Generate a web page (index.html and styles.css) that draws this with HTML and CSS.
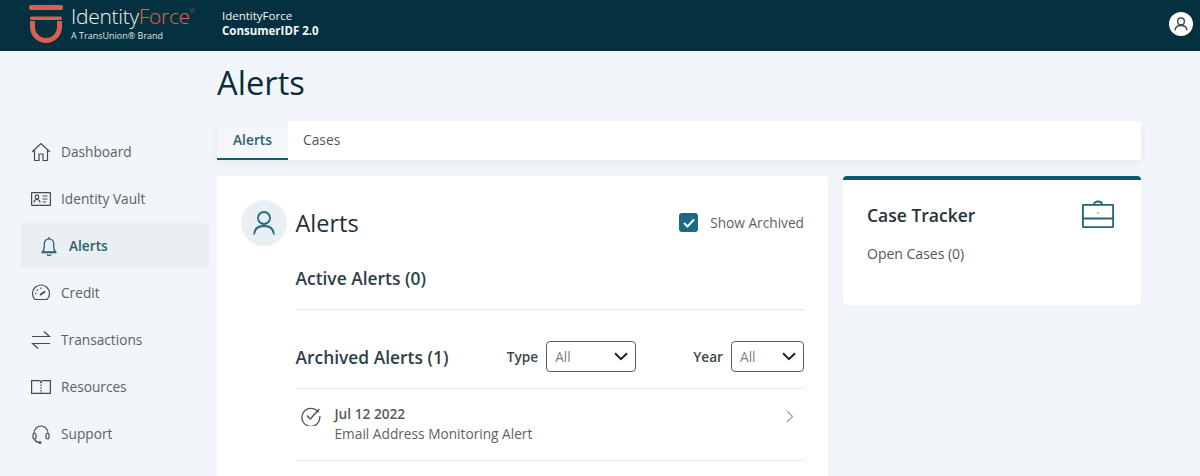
FILE: index.html
```html
<!DOCTYPE html>
<html lang="en">
<head>
<meta charset="utf-8">
<title>Alerts</title>
<link rel="stylesheet" href="styles.css">
</head>
<body>
<header class="topbar">
  <div class="brand">
    <svg class="logo" width="36" height="44" viewBox="0 0 36 44" fill="none">
      <rect x="1" y="3" width="34" height="5" rx="2" fill="#d9604f"/>
      <rect x="2" y="14.500" width="32" height="3.500" rx="1.500" fill="#d9604f"/>
      <path d="M4.500 19v6a13.500 13.500 0 0 0 27 0v-6" stroke="#d9604f" stroke-width="5"/>
    </svg>
    <div class="wordmark">
      <div class="wm-main">Identity<span class="wm-force">Force</span><sup class="wm-reg">®</sup></div>
      <div class="wm-sub">A TransUnion® Brand</div>
    </div>
  </div>
  <div class="product">
    <div>IdentityForce</div>
    <div class="product-b">ConsumerIDF 2.0</div>
  </div>
  <div class="avatar">
    <svg width="24" height="24" viewBox="0 0 24 24" fill="none" stroke="#3c4a52" stroke-width="1.800">
      <circle cx="12" cy="8.500" r="4.500"/>
      <path d="M4 20.500c.5-4.500 3.500-6.500 8-6.500s7.500 2 8 6.500"/>
    </svg>
  </div>
</header>
<div class="layout">
  <nav class="side">
    <a class="nav-item">
      <svg class="nav-icon" width="20" height="20" viewBox="0 0 20 20" fill="none" stroke="#444c52" stroke-width="1.200"><path d="M1 10 10 1.500 19 10M3.500 8v10.500h4.500v-6.500h4v6.500h4.500V8"/></svg>
      <span>Dashboard</span>
    </a>
    <a class="nav-item">
      <svg class="nav-icon" width="20" height="20" viewBox="0 0 20 20" fill="none" stroke="#444c52" stroke-width="1.200"><rect x=".6" y="3.600" width="18.800" height="12.800" rx=".5"/><circle cx="6" cy="8" r="1.800"/><path d="M3 13.500c0-2 1.300-3 3-3s3 1 3 3M11.500 7h5M11.500 10h5M11.500 13h3.500"/></svg>
      <span>Identity Vault</span>
    </a>
    <a class="nav-item is-active">
      <svg class="nav-icon" width="18" height="20" viewBox="0 0 18 20" fill="none" stroke="#2f5f6e" stroke-width="1.300"><path d="M2.500 16c1.300-1.500 1.800-2.500 1.800-5V7.500a4.700 4.700 0 0 1 9.400 0V11c0 2.500.5 3.500 1.800 5zM1.500 16.500h15M9 1v1.500M7 18.200a2.200 2.200 0 0 0 4 0"/></svg>
      <span>Alerts</span>
    </a>
    <a class="nav-item">
      <svg class="nav-icon" width="20" height="20" viewBox="0 0 20 20" fill="none" stroke="#444c52" stroke-width="1.200"><path d="M4 16.500a8.500 8.500 0 1 1 12 0z"/><path d="M9 12l5-3.500" stroke-width="2"/><path d="M4 10.500h1.500M10 4.500V6M5.800 6.500l1 1"/></svg>
      <span>Credit</span>
    </a>
    <a class="nav-item">
      <svg class="nav-icon" width="20" height="20" viewBox="0 0 20 20" fill="none" stroke="#444c52" stroke-width="1.200"><path d="M1 6.500h17.500L13 1.500M19 13.500H1.500L7 18.500"/></svg>
      <span>Transactions</span>
    </a>
    <a class="nav-item">
      <svg class="nav-icon" width="20" height="20" viewBox="0 0 20 20" fill="none" stroke="#444c52" stroke-width="1.200"><path d="M.6 3.600h7q2 0 2.400 1.200.4-1.200 2.400-1.200h7v12.800H.6z"/><path d="M10 4.800v13" stroke-dasharray="1.500 1.200"/></svg>
      <span>Resources</span>
    </a>
    <a class="nav-item">
      <svg class="nav-icon" width="20" height="20" viewBox="0 0 20 20" fill="none" stroke="#444c52" stroke-width="1.200"><path d="M3 10V9a7 7 0 0 1 14 0v1"/><rect x="2" y="9.500" width="3" height="5.500" rx="1.500"/><rect x="15" y="9.500" width="3" height="5.500" rx="1.500"/><path d="M3.500 15c.5 2 2 3 4.500 3.500"/><circle cx="9" cy="18.500" r=".9"/></svg>
      <span>Support</span>
    </a>
  </nav>
  <main class="content">
    <h1 class="page-title">Alerts</h1>
    <div class="tabs">
      <div class="tab is-current">Alerts</div>
      <div class="tab">Cases</div>
    </div>
    <div class="columns">
      <section class="alerts-card">
        <div class="alerts-head">
          <div class="circle">
            <svg width="24" height="26" viewBox="0 0 24 26" fill="none" stroke="#1f6a80" stroke-width="1.800"><circle cx="12" cy="8" r="6"/><path d="M2 24.500c.5-6 4.500-8.500 10-8.500s9.500 2.500 10 8.500"/></svg>
          </div>
          <h2 class="alerts-title">Alerts</h2>
          <label class="show-archived">
            <span class="checkbox">
              <svg width="12" height="10" viewBox="0 0 12 10" fill="none" stroke="#fff" stroke-width="2"><path d="M1 5l3.500 3.500L11 1.500"/></svg>
            </span>
            <span>Show Archived</span>
          </label>
        </div>
        <div class="alerts-body">
          <h3 class="section-title active-title">Active Alerts (0)</h3>
          <div class="archived-row">
            <h3 class="section-title">Archived Alerts (1)</h3>
            <div class="filters">
              <div class="filter">
                <span class="filter-label">Type</span>
                <div class="select select-type"><span>All</span><svg width="14" height="9" viewBox="0 0 14 9" fill="none" stroke="#1d2429" stroke-width="2"><path d="M1 1.200l6 6 6-6"/></svg></div>
              </div>
              <div class="filter">
                <span class="filter-label">Year</span>
                <div class="select select-year"><span>All</span><svg width="14" height="9" viewBox="0 0 14 9" fill="none" stroke="#1d2429" stroke-width="2"><path d="M1 1.200l6 6 6-6"/></svg></div>
              </div>
            </div>
          </div>
          <div class="alert-row">
            <svg class="alert-check" width="20" height="20" viewBox="0 0 20 20" fill="none" stroke="#4a5257" stroke-width="1.300"><path d="M17.500 6.500A9 9 0 1 0 18.800 10"/><path d="M5.800 9.500l3.500 3.500 9-10"/></svg>
            <div class="alert-text">
              <div class="alert-date">Jul 12 2022</div>
              <div class="alert-name">Email Address Monitoring Alert</div>
            </div>
            <svg class="alert-arrow" width="8" height="13" viewBox="0 0 8 13" fill="none" stroke="#9aa1a5" stroke-width="1.200"><path d="M1 1l5.500 5.500L1 12"/></svg>
          </div>
        </div>
      </section>
      <aside class="case-card">
        <div class="case-head">
          <h2 class="case-title">Case Tracker</h2>
          <svg class="case-icon" width="32" height="28" viewBox="0 0 32 28" fill="none" stroke="#1f6478" stroke-width="1.800"><rect x=".9" y="4.900" width="30.200" height="22.200" rx=".5"/><path d="M.9 18.500h30.200M12 4.500c0-4 8-4 8 0"/><path d="M16 12.500v1" stroke-width="1.300"/></svg>
        </div>
        <div class="case-open">Open Cases (0)</div>
      </aside>
    </div>
  </main>
</div>
</body>
</html>
```

FILE: styles.css
```css
* { box-sizing: border-box; }
html, body { height: 100%; }
body {
  margin: 0;
  background: #f2f5f9;
  font-family: "Open Sans", "Liberation Sans", sans-serif;
  color: #4f575c;
  overflow: hidden;
}
h1, h2, h3 { margin: 0; }

.topbar {
  height: 51px;
  background: #04303f;
  display: flex;
  align-items: center;
  color: #fff;
  padding-left: 28px;
}
.brand { display: flex; align-items: flex-start; width: 194px; height: 51px; }
.logo { margin-top: 2px; margin-right: 7px; flex: none; }
.wordmark { margin-top: 2px; }
.wm-main { font-size: 21px; font-weight: 300; line-height: 28px; letter-spacing: -.3px; color: #f0f4f5; white-space: nowrap; }
.wm-force { color: #e2634f; }
.wm-reg { font-size: 6px; line-height: 0; vertical-align: 11px; color: #e2634f; }
.wm-sub { font-size: 9px; line-height: 12px; margin-top: 0; color: #dfe6e8; white-space: nowrap; }
.product { font-size: 11.500px; line-height: 15px; color: #f4f7f8; flex: 1; margin-top: -5px; }
.product-b { font-weight: 700; }
.avatar {
  width: 24px; height: 24px; border-radius: 50%;
  background: #fff; margin-right: 7px; margin-top: -3px;
  display: flex; align-items: center; justify-content: center;
}
.avatar svg { width: 18px; height: 18px; }

.layout { display: flex; }
.side { width: 217px; flex: none; padding: 78px 8px 0 21px; }
.nav-item {
  height: 47px;
  display: flex;
  align-items: center;
  padding-left: 10px;
  padding-bottom: 2px;
  gap: 10px;
  font-size: 13.700px;
  color: #5b6266;
}
.nav-icon { flex: none; }
.nav-item.is-active {
  height: 46px;
  margin-bottom: 1px;
  padding-bottom: 1px;
  background: #e9eff2;
  border-radius: 4px;
  color: #2f5f6e;
  font-weight: 600;
  padding-left: 19px;
  gap: 11px;
}

.content { width: 924px; flex: none; }
.page-title {
  font-size: 32.700px;
  line-height: 41px;
  font-weight: 500;
  color: #0b2c39;
  margin-top: 11px;
  margin-bottom: 18px;
}
.tabs {
  height: 39px;
  background: #fff;
  display: flex;
  box-shadow: 0 2px 8px rgba(20, 40, 60, .06);
  border-radius: 2px;
}
.tab {
  padding: 0 15px;
  font-size: 13.800px;
  line-height: 37px;
  color: #4f575c;
  font-weight: 500;
}
.tab.is-current {
  width: 71px;
  padding: 0 16px;
  background: #f3f7fa;
  color: #2f5f6e;
  font-weight: 600;
  border-bottom: 2px solid #1a5a6e;
}
.columns { display: flex; gap: 15px; margin-top: 16px; align-items: flex-start; }

.alerts-card {
  width: 611px;
  height: 320px;
  background: #fff;
  border-radius: 2px;
  padding: 23px 24px 0 23px;
}
.alerts-head { display: flex; align-items: center; height: 47px; }
.circle {
  width: 46px; height: 46px; border-radius: 50%;
  background: #e9eff2;
  margin-left: 1px;
  display: flex; align-items: center; justify-content: center;
  flex: none;
}
.alerts-title {
  font-size: 23.500px;
  font-weight: 400;
  color: #1f2f36;
  margin-left: 8.500px;
  flex: 1;
}
.show-archived { display: flex; align-items: center; gap: 12px; font-size: 13.700px; color: #5b6266; }
.checkbox {
  width: 19px; height: 19px; border-radius: 3px;
  background: #1a6a86;
  display: flex; align-items: center; justify-content: center;
}
.alerts-body { margin-left: 55.500px; }
.section-title { font-size: 17.400px; line-height: 24px; font-weight: 600; color: #2b3f48; }
.active-title { margin-top: 20px; padding-bottom: 19px; border-bottom: 1px solid #e3e6e8; }
.archived-row {
  display: flex; align-items: center; justify-content: space-between;
  height: 79px;
  padding-top: 15px;
  border-bottom: 1px solid #e3e6e8;
}
.filters { display: flex; gap: 57px; }
.filter { display: flex; align-items: center; gap: 8px; }
.filter-label { font-size: 13.700px; font-weight: 600; color: #3c474d; }
.select {
  height: 31px;
  border: 1px solid #5a6266;
  border-radius: 4px;
  display: flex; align-items: center; justify-content: space-between;
  padding: 0 7px 0 8px;
  font-size: 13.700px;
  color: #7b8286;
}
.select-type { width: 90px; }
.select-year { width: 73px; }
.alert-row {
  height: 72px;
  display: flex;
  align-items: flex-start;
  padding: 0 10px 0 5px;
  border-bottom: 1px solid #e3e6e8;
}
.alert-check { flex: none; margin-right: 14px; margin-top: 17px; }
.alert-text { flex: 1; margin-top: 15px; }
.alert-date { font-size: 13.700px; line-height: 20px; font-weight: 600; color: #545c61; }
.alert-name { font-size: 13.700px; line-height: 20px; color: #5b6266; }
.alert-arrow { margin-top: 21px; }

.case-card {
  width: 298px;
  height: 129px;
  background: #fff;
  border-top: 4px solid #0d5a72;
  border-radius: 4px;
  padding: 22px 27px 0 24px;
}
.case-head { display: flex; justify-content: space-between; align-items: flex-start; }
.case-title { font-size: 17.500px; line-height: 26px; font-weight: 600; color: #26333a; }
.case-icon { margin-top: -2px; }
.case-open { font-size: 14px; line-height: 20px; margin-top: 16px; font-weight: 500; color: #4f575c; }
```
